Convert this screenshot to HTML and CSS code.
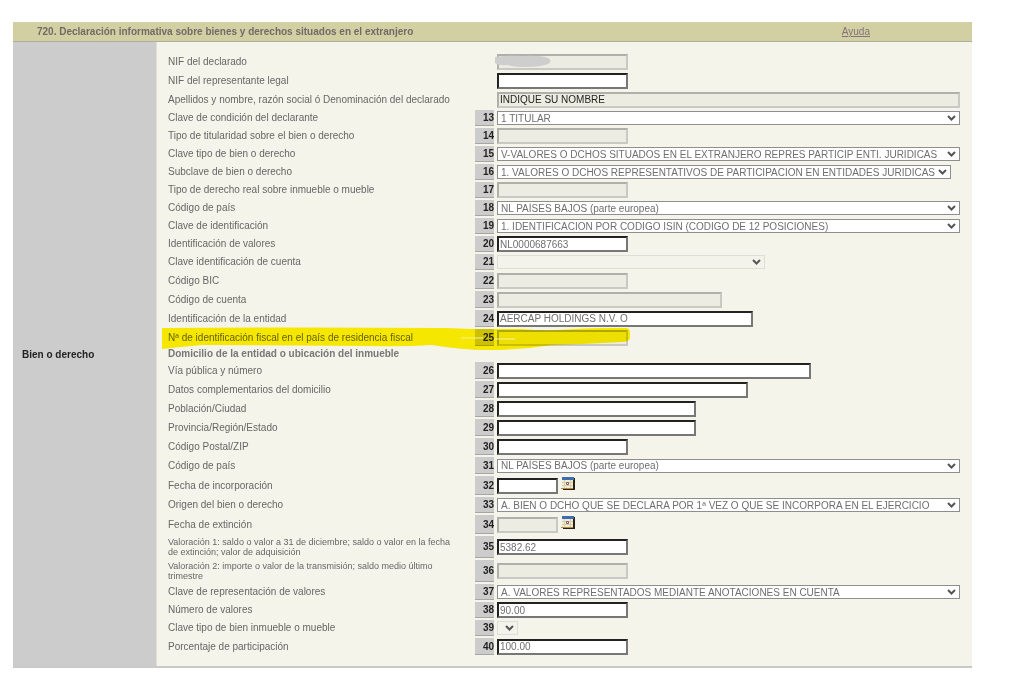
FILE: index.html
```html
<!DOCTYPE html>
<html lang="es">
<head>
<meta charset="utf-8">
<title>720. Declaración informativa</title>
<link rel="stylesheet" href="styles.css">
</head>
<body>
<form class="panel">
  <header class="head">
    <h1 class="title">720. Declaración informativa sobre bienes y derechos situados en el extranjero</h1>
    <a class="help" href="#">Ayuda</a>
  </header>
  <div class="body">
    <div class="side">Bien o derecho</div>
    <div class="rows">
      <div class="row"><label for="f1">NIF del declarado</label><span></span><div class="ctl"><input class="w-m" id="f1" disabled><svg class="smudge" width="58" height="13" viewBox="0 0 58 13"><path d="M1 2Q12 0 28 1Q46 0 54 3Q59 6 54 9Q46 12 32 12Q20 12 14 10Q4 11 1 8Z" fill="#cdcecd"/></svg></div></div>
      <div class="row"><label for="f2">NIF del representante legal</label><span></span><div class="ctl"><input class="w-m" id="f2"></div></div>
      <div class="row"><label for="f3">Apellidos y nombre, razón social ó Denominación del declarado</label><span></span><div class="ctl"><input class="w-full name" id="f3" value="INDIQUE SU NOMBRE" disabled></div></div>
      <div class="row short"><label for="f13">Clave de condición del declarante</label><span class="num">13</span><div class="ctl"><select class="w-full" id="f13"><option>1 TITULAR</option></select></div></div>
      <div class="row short"><label for="f14">Tipo de titularidad sobre el bien o derecho</label><span class="num">14</span><div class="ctl"><input class="w-m" id="f14" disabled></div></div>
      <div class="row short"><label for="f15">Clave tipo de bien o derecho</label><span class="num">15</span><div class="ctl"><select class="w-full" id="f15"><option>V-VALORES O DCHOS SITUADOS EN EL EXTRANJERO REPRES PARTICIP ENTI. JURIDICAS</option></select></div></div>
      <div class="row short"><label for="f16">Subclave de bien o derecho</label><span class="num">16</span><div class="ctl"><select id="f16"><option>1. VALORES O DCHOS REPRESENTATIVOS DE PARTICIPACION EN ENTIDADES JURIDICAS</option></select></div></div>
      <div class="row short"><label for="f17">Tipo de derecho real sobre inmueble o mueble</label><span class="num">17</span><div class="ctl"><input class="w-m" id="f17" disabled></div></div>
      <div class="row short"><label for="f18">Código de país</label><span class="num">18</span><div class="ctl"><select class="w-full" id="f18"><option>NL PAÍSES BAJOS (parte europea)</option></select></div></div>
      <div class="row short"><label for="f19">Clave de identificación</label><span class="num">19</span><div class="ctl"><select class="w-full" id="f19"><option>1. IDENTIFICACION POR CODIGO ISIN (CODIGO DE 12 POSICIONES)</option></select></div></div>
      <div class="row short"><label for="f20">Identificación de valores</label><span class="num">20</span><div class="ctl"><input class="w-m" id="f20" value="NL0000687663"></div></div>
      <div class="row short"><label for="f21">Clave identificación de cuenta</label><span class="num">21</span><div class="ctl"><select class="w-acc" id="f21" disabled><option></option></select></div></div>
      <div class="row"><label for="f22">Código BIC</label><span class="num">22</span><div class="ctl"><input class="w-m" id="f22" disabled></div></div>
      <div class="row"><label for="f23">Código de cuenta</label><span class="num">23</span><div class="ctl"><input class="w-l" id="f23" disabled></div></div>
      <div class="row"><label for="f24">Identificación de la entidad</label><span class="num">24</span><div class="ctl"><input class="w-ent" id="f24" value="AERCAP HOLDINGS N.V. O"></div></div>
      <div class="row"><label for="f25">Nª de identificación fiscal en el país de residencia fiscal</label><span class="num">25</span><div class="ctl"><input class="w-m" id="f25" disabled></div>
        <svg class="marker" width="468" height="23" viewBox="0 0 468 23"><path d="M0 1Q140 0 284 1L310 2L360 2Q378 4 396 3Q425 1 442 1L464 1Q468 1 468 6V11Q467 15 460 15L420 17L390 18Q360 23 325 23Q300 23 270 18Q240 20 210 19L40 18Q18 20 0 22Z" fill="#fff200"/></svg>
        <svg class="streak" width="56" height="3" viewBox="0 0 56 3"><path d="M0 1H22M33 2H54" stroke="#f8f2a0" fill="none"/></svg></div>
      <h2 class="sub">Domicilio de la entidad o ubicación del inmueble</h2>
      <div class="row"><label for="f26">Vía pública y número</label><span class="num">26</span><div class="ctl"><input class="w-via" id="f26"></div></div>
      <div class="row"><label for="f27">Datos complementarios del domicilio</label><span class="num">27</span><div class="ctl"><input class="w-dat" id="f27"></div></div>
      <div class="row"><label for="f28">Población/Ciudad</label><span class="num">28</span><div class="ctl"><input class="w-city" id="f28"></div></div>
      <div class="row"><label for="f29">Provincia/Región/Estado</label><span class="num">29</span><div class="ctl"><input class="w-city" id="f29"></div></div>
      <div class="row"><label for="f30">Código Postal/ZIP</label><span class="num">30</span><div class="ctl"><input class="w-m" id="f30"></div></div>
      <div class="row"><label for="f31">Código de país</label><span class="num">31</span><div class="ctl"><select class="w-full" id="f31"><option>NL PAÍSES BAJOS (parte europea)</option></select></div></div>
      <div class="row date"><label for="f32">Fecha de incorporación</label><span class="num">32</span><div class="ctl"><input class="w-date" id="f32"><button type="button" class="cal" aria-label="Calendario"><svg width="14" height="13" viewBox="0 0 14 13"><path d="M2 1H14V13H2Z" fill="#2b2216"/><path d="M1 1H12V11H1Z" fill="#f3edcf"/><path d="M1 0H13V3H1Z" fill="#3f6eae"/><path d="M0 11H12V12H0Z" fill="#b08a3c"/><path d="M3.500 3V11M9.500 3V11M1 5.500H12M1 8.500H12" stroke="#d5cfb8"/><path d="M5.500 5.500H7.500V7.500H5.500Z" fill="#fff" stroke="#8a5a66"/></svg></button></div></div>
      <div class="row short"><label for="f33">Origen del bien o derecho</label><span class="num">33</span><div class="ctl"><select class="w-full" id="f33"><option>A. BIEN O DCHO QUE SE DECLARA POR 1ª VEZ O QUE SE INCORPORA EN EL EJERCICIO</option></select></div></div>
      <div class="row date"><label for="f34">Fecha de extinción</label><span class="num">34</span><div class="ctl"><input class="w-date" id="f34" disabled><button type="button" class="cal" aria-label="Calendario"><svg width="14" height="13" viewBox="0 0 14 13"><path d="M2 1H14V13H2Z" fill="#2b2216"/><path d="M1 1H12V11H1Z" fill="#f3edcf"/><path d="M1 0H13V3H1Z" fill="#3f6eae"/><path d="M0 11H12V12H0Z" fill="#b08a3c"/><path d="M3.500 3V11M9.500 3V11M1 5.500H12M1 8.500H12" stroke="#d5cfb8"/><path d="M5.500 5.500H7.500V7.500H5.500Z" fill="#fff" stroke="#8a5a66"/></svg></button></div></div>
      <div class="row tall"><label for="f35">Valoración 1: saldo o valor a 31 de diciembre; saldo o valor en la fecha de extinción; valor de adquisición</label><span class="num">35</span><div class="ctl"><input class="w-m" id="f35" value="5382.62"></div></div>
      <div class="row tall"><label for="f36">Valoración 2: importe o valor de la transmisión; saldo medio último trimestre</label><span class="num">36</span><div class="ctl"><input class="w-m" id="f36" disabled></div></div>
      <div class="row short"><label for="f37">Clave de representación de valores</label><span class="num">37</span><div class="ctl"><select class="w-full" id="f37"><option>A. VALORES REPRESENTADOS MEDIANTE ANOTACIONES EN CUENTA</option></select></div></div>
      <div class="row short"><label for="f38">Número de valores</label><span class="num">38</span><div class="ctl"><input class="w-m" id="f38" value="90.00"></div></div>
      <div class="row short"><label for="f39">Clave tipo de bien inmueble o mueble</label><span class="num">39</span><div class="ctl"><select class="w-xs" id="f39" disabled><option></option></select></div></div>
      <div class="row"><label for="f40">Porcentaje de participación</label><span class="num">40</span><div class="ctl"><input class="w-m" id="f40" value="100.00"></div></div>
    </div>
  </div>
</form>
</body>
</html>
```
FILE: styles.css
```css
* { box-sizing: border-box; }
body { margin: 0; background: #fff; font-family: "Liberation Sans", Arial, sans-serif; font-size: 10px; color: #666; }
.panel { margin: 22px 52px 0 13px; border-bottom: 2px solid #c9c9c7; }
.head { display: flex; justify-content: space-between; align-items: center; height: 20px; padding: 0 102px 0 24px; background: #d2d0a2; border-bottom: 1px solid #aeae9c; }
.title { margin: 0; font-size: 10px; font-weight: bold; color: #756868; }
.help { color: #85717a; }
.body { display: grid; grid-template-columns: 144px 1fr; }
.side { display: flex; align-items: center; padding-left: 9px; background: #ccc; border-right: 1px solid #dededa; font-weight: bold; color: #222; }
.rows { padding: 10px 12px 10px 11px; background: #f5f4eb; }
.row { display: grid; grid-template-columns: 307px 19px 1fr; align-items: center; min-height: 19px; position: relative; }
.short { min-height: 18px; }
.date { min-height: 21px; }
.tall { min-height: 24px; }
.row label { line-height: 10px; }
.tall label { padding-right: 16px; font-size: 9px; }
.num { display: flex; align-items: center; justify-content: flex-end; align-self: stretch; margin: 1px 0; background: #ccc; border-bottom: 1px solid #a6a6a6; font-weight: bold; color: #222; }
.ctl { display: flex; align-items: center; padding-left: 3px; position: relative; }
.sub { margin: 0; font-size: 10px; line-height: 14px; font-weight: bold; color: #777; }
input, select { height: 16px; margin: 0; border-radius: 0; font: 10px "Liberation Sans", Arial, sans-serif; color: #6f6f6f; background-color: #fff; }
input { padding: 0 1px; border: 2px solid; border-color: #222 #777 #777 #222; }
input:disabled { background: #edece2; border-color: #b0b0aa #c9c9c3 #c9c9c3 #b0b0aa; }
input.name { color: #222; }
select { appearance: none; height: 14px; padding: 0 15px 0 3px; border: 1px solid #8e8e8e; background-image: url("data:image/svg+xml,%3Csvg xmlns='http://www.w3.org/2000/svg' width='9' height='6'%3E%3Cpath d='M1 1L4.500 4.500L8 1' fill='none' stroke='%23555' stroke-width='2'/%3E%3C/svg%3E"); background-repeat: no-repeat; background-position: right 3px center; }
select:disabled { opacity: 1; background-color: #f4f3eb; border-color: #deded8; }
.w-full { width: 100%; }
.w-m { width: 131px; }
.w-l { width: 225px; }
.w-ent { width: 256px; }
.w-via { width: 314px; }
.w-dat { width: 251px; }
.w-city { width: 199px; }
.w-acc { width: 268px; }
.w-xs { width: 21px; padding: 0; }
.w-date { width: 61px; }
.cal { display: flex; margin: 0 0 5px 3px; padding: 0; border: 0; background: none; }
.smudge { position: absolute; left: 0; top: 1px; }
.marker { position: absolute; left: -6px; top: -1px; mix-blend-mode: multiply; pointer-events: none; }
.streak { position: absolute; left: 293px; top: 9px; pointer-events: none; }
```
